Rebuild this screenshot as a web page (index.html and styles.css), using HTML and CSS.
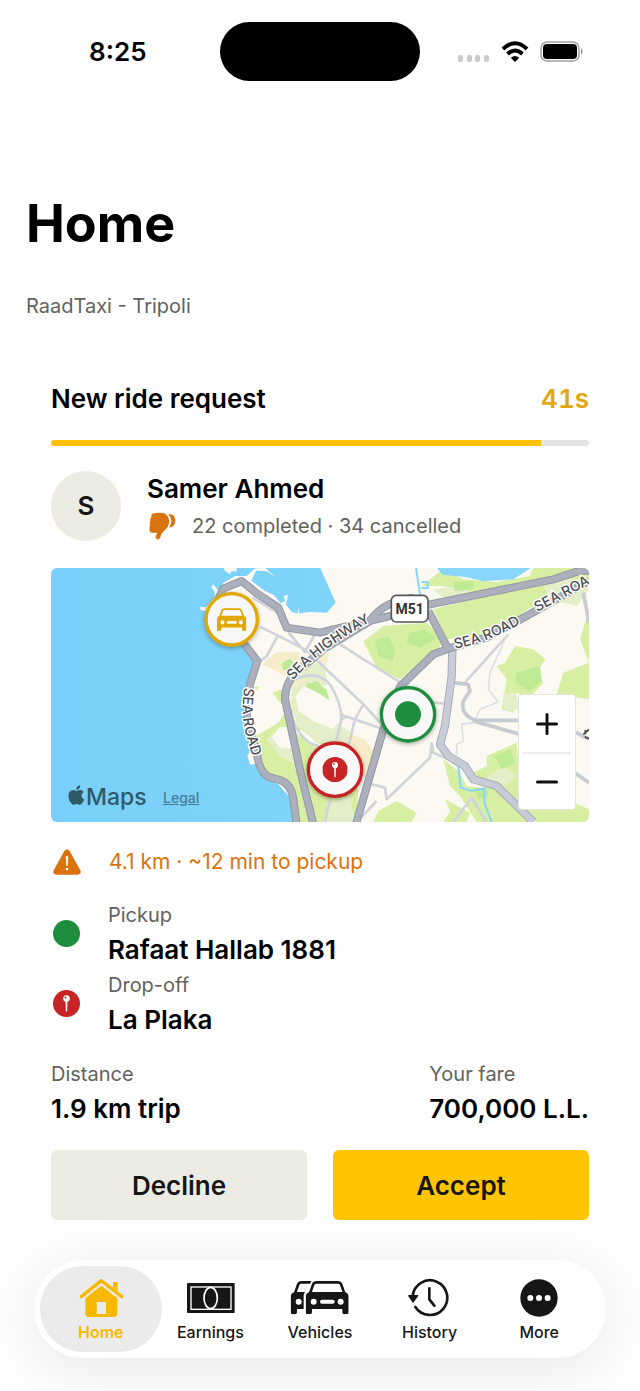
FILE: index.html
```
<!DOCTYPE html>
<html lang="en">
<head>
    <meta charset="UTF-8">
    <meta name="viewport" content="width=device-width, initial-scale=1.0">
    <title>RaadTaxi Driver - Home</title>
    <link rel="stylesheet" href="styles.css">
</head>
<body>
    <!-- shared icons -->
    <svg class="sprite" aria-hidden="true">
        <symbol id="car" viewBox="0 0 129 100">
            <path d="M13 37 L23 9 Q26 4 33 4 H96 Q103 4 106 9 L116 37" fill="none" stroke="currentColor" stroke-width="8"/>
            <path fill="currentColor" fill-rule="evenodd" d="M0 46 Q1 36 12 33 H117 Q128 36 129 46 V94 Q129 100 123 100 H116 Q110 100 110 94 V84 H19 V94 Q19 100 13 100 H6 Q0 100 0 94 Z M15 62 a9 9 0 1 0 18 0 a9 9 0 1 0 -18 0 Z M96 62 a9 9 0 1 0 18 0 a9 9 0 1 0 -18 0 Z M49 56 H81 a6 6 0 0 1 0 12 H49 a6 6 0 0 1 0 -12 Z"/>
        </symbol>
        <symbol id="pin" viewBox="0 0 82 82">
            <circle cx="41" cy="41" r="41" fill="#c62427"/>
            <path d="M38 32 H44 L43 64 L41 67 L39 64 Z" fill="#fff"/>
            <circle cx="41" cy="26" r="10" fill="#fff"/>
            <circle cx="38" cy="23" r="3" fill="#c62427"/>
        </symbol>
    </svg>

    <header class="status-bar">
        <span class="time">8:25</span>
        <span class="island"></span>
        <div class="status-icons">
            <svg width="32" height="21" viewBox="0 0 32 21" fill="#cbcbcb">
                <rect x="0" y="14" width="5" height="7" rx="2"/>
                <rect x="9" y="14" width="5" height="7" rx="2"/>
                <rect x="17" y="14" width="5" height="7" rx="2"/>
                <rect x="26" y="14" width="5" height="7" rx="2"/>
            </svg>
            <svg width="28" height="21" viewBox="0 0 28 21" fill="none" stroke="#000" stroke-width="4">
                <path d="M2 8 Q14 -3.500 26 8"/>
                <path d="M6.500 13 Q14 6 21.500 13"/>
                <path d="M14 21 L9.800 16.700 Q14 13.300 18.200 16.700 Z" fill="#000" stroke="none"/>
            </svg>
            <svg width="44" height="21" viewBox="0 0 44 21">
                <rect x="1" y="1" width="38" height="19" rx="6" fill="none" stroke="#a0a0a0" stroke-width="1.500"/>
                <rect x="3" y="3" width="34" height="15" rx="4"/>
                <path d="M41 7 Q44 10.500 41 14 Z" fill="#8a8a8a"/>
            </svg>
        </div>
    </header>

    <main>
        <h1>Home</h1>
        <p class="subtitle">RaadTaxi - Tripoli</p>

        <section class="request">
            <div class="request-head">
                <h2>New ride request</h2>
                <span class="timer">41s</span>
            </div>
            <div class="progress"><div class="progress-fill" style="width: 91%"></div></div>

            <div class="rider">
                <div class="avatar">S</div>
                <div class="rider-info">
                    <p class="strong">Samer Ahmed</p>
                    <p class="rider-stats">
                        <svg width="27" height="28" viewBox="0 0 81 84" fill="#d9730d">
                            <path d="M10 5 Q30 0 46 4 Q62 12 60 34 Q56 50 42 59 Q35 66 34 76 Q32 84 24 82 Q18 79 21 70 L25 62 H8 Q0 61 2 52 Q0 46 3 40 Q0 34 4 28 Q2 20 7 16 Q6 9 10 5 Z"/>
                            <path d="M58 6 Q78 4 79 27 Q77 46 60 47 Q75 26 58 6 Z"/>
                        </svg>
                        <span>22 completed · 34 cancelled</span>
                    </p>
                </div>
            </div>

            <div class="map">
                <svg class="map-canvas" viewBox="3 6 1614 762" preserveAspectRatio="xMidYMid slice">
                    <defs>
                        <linearGradient id="sea" x1="0" y1="0" x2="1" y2="0">
                            <stop offset="0" stop-color="#78cff9"/>
                            <stop offset="1" stop-color="#86d8fa"/>
                        </linearGradient>
                        <filter id="shadow" x="-30%" y="-30%" width="160%" height="160%">
                            <feDropShadow dx="0" dy="4" stdDeviation="6" flood-opacity="0.35"/>
                        </filter>
                        <path id="coast-label" d="M584 364 Q568 440 592 520 L630 650"/>
                        <path id="highway-label" d="M728 344 Q780 286 830 250 Q900 198 1020 136"/>
                        <path id="road-label" d="M1215 248 Q1330 228 1470 138"/>
                        <path id="road-label-2" d="M1462 138 L1720 0"/>
                    </defs>
                    <rect width="1620" height="774" fill="url(#sea)"/>

                    <!-- land -->
                    <path fill="#fbf9f2" d="M556 30 L590 30 L613 8 L645 5 L678 34 L650 16 L618 14 L604 44 L640 72 L672 88 L692 112 L706 104 L700 90 L714 86 L708 116 L726 138 L742 142 L748 120 L746 142 L780 138 L830 140 L857 110 L812 8 V5 H1620 V774 H735 L725 700 L684 654 L640 630 L618 594 L600 596 L592 570 L600 556 L588 450 L600 380 L612 290 L580 240 L480 180 L470 136 L452 132 L450 122 L468 124 L494 92 L494 78 L484 64 L490 55 L506 76 L520 50 Z"/>
                    <path fill="#fbf9f2" d="M520 6 H560 V16 H545 L540 24 L526 16 Z"/>

                    <!-- parks and fields -->
                    <g fill="#d7efa3">
                        <path d="M618 510 L685 470 L705 440 L735 480 L790 768 H742 L728 690 L690 642 L640 625 Z"/>
                        <path d="M668 380 L700 368 L715 430 L690 410 Z M612 362 L628 360 L622 374 Z"/>
                        <path d="M722 400 L760 430 L790 460 L770 500 L745 490 Z"/>
                        <path d="M735 500 L800 545 L870 520 L910 590 L925 680 L918 768 H790 Z"/>
                        <path d="M1115 60 L1140 40 L1180 8 L1240 40 L1340 48 L1440 30 L1450 6 H1617 V60 L1440 125 L1340 205 L1190 220 L1150 130 L1310 90 L1180 60 Z"/>
                        <path d="M940 226 L1000 180 L1130 170 L1180 220 L1160 262 L1050 340 L980 305 Z"/>
                        <path d="M1340 300 L1365 290 L1395 240 L1450 250 L1486 280 L1460 320 L1480 350 L1440 395 L1400 380 L1390 440 L1355 430 L1370 340 Z"/>
                        <path d="M1617 130 L1590 220 L1617 290 Z M1617 290 L1540 320 L1520 385 L1617 400 Z"/>
                        <path d="M1180 580 L1230 620 L1250 660 L1340 670 L1450 768 H1280 L1230 690 L1200 660 Z"/>
                        <path d="M1310 570 L1400 530 L1410 640 L1617 730 V768 H1460 L1360 660 L1250 630 L1310 600 Z"/>
                        <path d="M985 735 L1040 705 L1100 740 L1085 768 H970 Z M1185 700 L1260 740 L1250 768 H1180 L1200 735 Z"/>
                    </g>
                    <g fill="#e4eec8">
                        <path d="M650 520 L690 480 L728 530 L745 600 L690 570 Z"/>
                        <path d="M725 350 L790 285 L822 300 L835 355 L790 370 L725 400 Z"/>
                        <path d="M722 385 L745 400 L770 440 L860 470 L905 500 L890 560 L800 530 L745 480 Z"/>
                        <path d="M1150 70 L1240 60 L1280 95 L1190 105 Z M1480 60 L1560 35 L1617 70 L1580 120 L1500 100 Z"/>
                        <path d="M1360 380 L1400 380 L1405 430 L1360 435 Z M1300 640 L1360 600 L1400 630 L1360 660 Z"/>
                        <path d="M832 715 L900 690 L915 768 H825 Z"/>
                    </g>
                    <g fill="#f6ecca">
                        <path d="M635 295 L680 258 L745 258 L765 285 L728 345 L680 315 Z"/>
                        <path d="M728 345 L770 340 L765 352 L735 365 Z M700 395 L722 400 L735 440 L712 440 Z"/>
                        <path d="M890 500 L945 520 L972 560 L955 650 L920 600 Z M800 270 L840 262 L825 302 L805 300 Z"/>
                    </g>
                    <g fill="#bdea93">
                        <path d="M696 290 L722 278 L738 300 L728 322 L698 310 Z M768 355 L800 346 L830 372 L838 404 L812 392 L770 368 Z"/>
                        <path d="M975 222 L1015 210 L1035 250 L1028 285 L985 270 Z M1080 200 L1125 190 L1160 215 L1110 245 L1070 230 Z"/>
                        <path d="M1210 48 L1270 45 L1268 70 L1215 75 Z M1400 320 L1470 300 L1475 345 L1440 375 L1395 350 Z"/>
                        <path d="M1335 570 L1380 550 L1395 590 L1355 610 Z M1275 668 L1312 664 L1314 690 L1285 698 Z"/>
                    </g>
                    <path fill="#fbf9f2" d="M665 515 L690 484 L725 482 L742 550 L690 545 Z M738 390 L760 360 L800 378 L850 410 L868 460 L850 490 L790 465 L745 435 Z"/>

                    <!-- inner water -->
                    <path fill="#88d7fa" d="M1160 5 L1178 26 L1250 34 L1300 46 L1390 40 L1440 8 V5 Z"/>
                    <path d="M1098 5 L1111 92 M1114 48 H1133 V66 H1114" fill="none" stroke="#88d7fa" stroke-width="6"/>
                    <path d="M1195 575 L1225 600 L1232 665 L1262 674 L1303 668 V710 L1325 768" fill="none" stroke="#88d7fa" stroke-width="6"/>

                    <!-- small streets -->
                    <g fill="none" stroke="#d1d5db" stroke-width="8" stroke-linejoin="round">
                        <path d="M608 95 L690 145 L720 205 L765 258 L795 205 M630 182 L765 250 L940 415 L1000 480"/>
                        <path d="M682 212 L650 270 L632 285 M940 415 L915 460 L895 540"/>
                        <path d="M735 340 Q800 310 840 355 Q880 420 872 470 L860 520 M842 695 L825 768"/>
                        <path d="M870 235 L1060 355 M872 440 L885 455 L872 462 M885 450 L1000 490 M1375 205 L1240 355"/>
                        <path d="M722 430 Q740 525 805 540 M1150 410 L1180 412 M1145 530 L1150 560 L1185 575"/>
                        <path d="M1145 530 L1140 575 L1010 700 L1005 665 L965 655 M980 705 L920 768 M1210 768 L1265 695 L1310 768"/>
                    </g>
                    <path d="M1370 210 L1320 320 L1315 370 L1345 408 L1290 430 L1270 470 L1235 475 L1240 525 L1220 535 V568" fill="none" stroke="#dde0e3" stroke-width="5"/>
                    <g fill="none" stroke="#c6ccd1" stroke-width="11" stroke-linejoin="round">
                        <path d="M1210 350 L1255 356 L1260 375 L1240 405 Q1230 445 1275 463 H1420"/>
                        <path d="M1270 465 L1420 508 L1560 490 L1617 520 M1560 610 L1617 650 M1600 80 L1617 170"/>
                    </g>

                    <!-- main roads, casing first -->
                    <g fill="none" stroke-linejoin="round">
                        <path d="M1207 250 L1205 330 L1185 480 L1170 535 L1195 570 L1245 600 L1270 640 L1340 660 L1450 768" stroke="#a8adb9" stroke-width="25"/>
                        <path d="M1207 250 L1205 330 L1185 480 L1170 535 L1195 570 L1245 600 L1270 640 L1340 660 L1450 768" stroke="#c8ccd6" stroke-width="19"/>
                        <g stroke="#9398a5" stroke-width="24">
                            <path d="M500 108 L520 68 L575 45 L620 82 L685 125 L710 185 L810 200 L1020 150 L1140 115 L1510 40 L1590 14 H1617"/>
                            <path d="M580 230 L622 285 L600 355 L590 450 L620 560 Q630 625 660 634 L690 642 Q725 655 730 700 L740 774"/>
                            <path d="M790 774 L752 620 L705 400 Q705 350 740 318 L820 250 L960 165 Q1000 105 1090 95"/>
                            <path d="M918 774 L1000 490 L1050 362 L1150 265 L1195 248 L1310 215 L1430 150 L1617 45"/>
                            <path d="M1135 135 L1195 250"/>
                        </g>
                        <g stroke="#abb0bc" stroke-width="18">
                            <path d="M500 108 L520 68 L575 45 L620 82 L685 125 L710 185 L810 200 L1020 150 L1140 115 L1510 40 L1590 14 H1617"/>
                            <path d="M580 230 L622 285 L600 355 L590 450 L620 560 Q630 625 660 634 L690 642 Q725 655 730 700 L740 774"/>
                            <path d="M790 774 L752 620 L705 400 Q705 350 740 318 L820 250 L960 165 Q1000 105 1090 95"/>
                            <path d="M918 774 L1000 490 L1050 362 L1150 265 L1195 248 L1310 215 L1430 150 L1617 45"/>
                            <path d="M1135 135 L1195 250"/>
                        </g>
                    </g>

                    <g class="road-text">
                        <text><textPath href="#coast-label">SEA ROAD</textPath></text>
                        <text><textPath href="#highway-label">SEA HIGHWAY</textPath></text>
                        <text><textPath href="#road-label">SEA ROAD</textPath></text>
                        <text><textPath href="#road-label-2">SEA ROA</textPath></text>
                    </g>
                    <rect x="1024" y="88" width="110" height="80" rx="15" fill="#fff" stroke="#55575b" stroke-width="5"/>
                    <text class="shield-text" x="1079" y="144">M51</text>
                    <path d="M1600 505 L1617 490 M1604 512 L1617 518 M1606 492 V505" stroke="#444" stroke-width="5"/>

                    <!-- markers -->
                    <g stroke-width="10" fill="#f8f8f8">
                        <circle cx="545" cy="160" r="77" stroke="#e0a800" filter="url(#shadow)"/>
                        <circle cx="1074" cy="445" r="80" stroke="#1e8e3e" filter="url(#shadow)"/>
                        <circle cx="855" cy="611" r="80" stroke="#c62427" filter="url(#shadow)"/>
                    </g>
                    <use class="car-marker" href="#car" x="501" y="126" width="88" height="70"/>
                    <circle cx="1074" cy="445" r="39" fill="#1e8e3e"/>
                    <use href="#pin" x="817" y="573" width="76" height="76"/>

                    <!-- map provider -->
                    <g fill="#305967">
                        <path transform="translate(50 658) scale(2.420)" d="M12.152 6.896c-.948 0-2.415-1.078-3.960-1.040-2.040.027-3.910 1.183-4.961 3.014-2.117 3.675-.546 9.103 1.519 12.090 1.013 1.454 2.208 3.090 3.792 3.039 1.520-.065 2.090-.987 3.935-.987 1.831 0 2.350.987 3.960.948 1.637-.026 2.676-1.480 3.676-2.948 1.156-1.688 1.636-3.325 1.662-3.415-.039-.013-3.182-1.221-3.220-4.857-.026-3.040 2.480-4.494 2.597-4.559-1.429-2.090-3.623-2.324-4.390-2.376-2-.156-3.675 1.090-4.610 1.090zM15.530 3.830c.843-1.012 1.400-2.427 1.245-3.830-1.207.052-2.662.805-3.532 1.818-.780.896-1.454 2.338-1.273 3.714 1.338.104 2.715-.688 3.559-1.701"/>
                        <text class="maps-text" x="108" y="716">Maps</text>
                    </g>
                </svg>
                <a class="legal" href="#">Legal</a>
                <div class="zoom">
                    <button type="button" aria-label="Zoom in">
                        <svg width="22" height="22" viewBox="0 0 22 22"><path d="M1.500 11 H20.500 M11 1.500 V20.500"/></svg>
                    </button>
                    <button type="button" aria-label="Zoom out">
                        <svg width="22" height="22" viewBox="0 0 22 22"><path d="M1.500 11 H20.500"/></svg>
                    </button>
                </div>
            </div>

            <div class="eta">
                <svg width="28" height="26" viewBox="0 0 84 78">
                    <path d="M34 6 Q42 -4 50 6 L82 64 Q86 76 74 77 H10 Q-2 76 2 64 Z" fill="#d9730d"/>
                    <path d="M38 22 H46 L44 50 H40 Z" fill="#fff"/>
                    <circle cx="42" cy="60" r="4" fill="#fff"/>
                </svg>
                <span>4.1 km · ~12 min to pickup</span>
            </div>

            <div class="stop">
                <span class="dot"></span>
                <div>
                    <p class="label">Pickup</p>
                    <p class="strong">Rafaat Hallab 1881</p>
                </div>
            </div>
            <div class="stop">
                <svg width="27" height="27"><use href="#pin"/></svg>
                <div>
                    <p class="label">Drop-off</p>
                    <p class="strong">La Plaka</p>
                </div>
            </div>

            <div class="trip">
                <div>
                    <p class="label">Distance</p>
                    <p class="strong">1.9 km trip</p>
                </div>
                <div>
                    <p class="label">Your fare</p>
                    <p class="strong">700,000 L.L.</p>
                </div>
            </div>

            <div class="actions">
                <button type="button" class="btn">Decline</button>
                <button type="button" class="btn btn-accept">Accept</button>
            </div>
        </section>
    </main>

    <nav class="tab-bar">
        <a class="tab active" href="#">
            <svg width="60" height="40" viewBox="0 0 180 120">
                <path d="M31 56 L91 8 L152 56" fill="none" stroke="currentColor" stroke-width="10" stroke-linecap="round" stroke-linejoin="round"/>
                <path d="M126 14 Q126 12 129 12 H137 Q140 12 140 14 V40 L126 29 Z" fill="currentColor"/>
                <path fill-rule="evenodd" d="M91 23 L139 61 V106 Q139 117 128 117 H54 Q43 117 43 106 V61 Z M77 72 V108 H105 V72 Z" fill="currentColor"/>
            </svg>
            <span>Home</span>
        </a>
        <a class="tab" href="#">
            <svg width="60" height="40" viewBox="0 0 180 120">
                <rect x="21" y="15" width="143" height="90" rx="3" fill="currentColor"/>
                <rect x="33" y="27" width="120" height="67" fill="none" stroke="#fff" stroke-width="4"/>
                <ellipse cx="92" cy="60" rx="20" ry="32" fill="currentColor" stroke="#fff" stroke-width="5"/>
            </svg>
            <span>Earnings</span>
        </a>
        <a class="tab" href="#">
            <svg width="60" height="40" viewBox="0 0 180 120">
                <use href="#car" x="2" y="9" width="129" height="100"/>
                <path d="M41 120 V52 Q42 42 53 36 L64 8 Q68 0 80 0 H180 V120 Z" fill="#fff"/>
                <use href="#car" x="47" y="9" width="129" height="100"/>
            </svg>
            <span>Vehicles</span>
        </a>
        <a class="tab" href="#">
            <svg width="60" height="40" viewBox="0 0 180 120">
                <path d="M38 54 A52 52 0 1 1 46 87 M88 31 V64 L103 83" fill="none" stroke="currentColor" stroke-width="8" stroke-linecap="round" stroke-linejoin="round"/>
                <path d="M24 53 Q24 51 27 51 H53 Q56 51 55 54 L41 73 Q39 75 37 73 Z" fill="currentColor"/>
            </svg>
            <span>History</span>
        </a>
        <a class="tab" href="#">
            <svg width="60" height="40" viewBox="0 0 180 120">
                <circle cx="90" cy="60" r="56" fill="currentColor"/>
                <g fill="#fff"><circle cx="64" cy="60" r="9"/><circle cx="90" cy="60" r="9"/><circle cx="116" cy="60" r="9"/></g>
            </svg>
            <span>More</span>
        </a>
    </nav>
</body>
</html>
```
FILE: styles.css
```
* {
    box-sizing: border-box;
}
body {
    margin: 0;
    font-family: Inter, sans-serif;
    background-color: #fefefe;
    color: #000;
    overflow-x: hidden;
}
h1, h2, p {
    margin: 0;
}
svg {
    display: block;
    flex-shrink: 0;
}
button {
    font-family: inherit;
    border: none;
    padding: 0;
    cursor: pointer;
}
a {
    color: inherit;
}
.sprite {
    width: 0;
    height: 0;
    position: absolute;
}

/* status bar */
.status-bar {
    display: grid;
    grid-template-columns: 1fr 200px 1fr;
    align-items: center;
    padding-top: 22px;
}
.time {
    padding-left: 89px;
    font-size: 26px;
    font-weight: 600;
}
.island {
    height: 59px;
    border-radius: 30px;
    background-color: #000;
}
.status-icons {
    display: flex;
    justify-content: flex-end;
    gap: 11px;
    padding-right: 56px;
}

main {
    padding: 0 26px;
}
h1 {
    margin-top: 111px;
    font-size: 52px;
    line-height: 64px;
    font-weight: 700;
}
.subtitle {
    margin-top: 36px;
    font-size: 20px;
    line-height: 28px;
    color: #62625d;
}

/* ride request */
.request {
    padding: 0 25px;
    margin-top: 63px;
}
.request-head {
    display: flex;
    justify-content: space-between;
    line-height: 32px;
}
h2, .strong, .timer {
    font-size: 26px;
    font-weight: 600;
}
.timer {
    color: #e0a810;
    font-variant-numeric: tabular-nums;
}
.progress {
    height: 6px;
    margin-top: 25px;
    border-radius: 3px;
    background-color: #e3e3e3;
    overflow: hidden;
}
.progress-fill {
    height: 100%;
    background-color: #ffc107;
}
.rider {
    display: flex;
    gap: 26px;
    margin-top: 25px;
}
.avatar {
    width: 70px;
    height: 70px;
    border-radius: 50%;
    background-color: #ecece4;
    color: #161616;
    font-size: 26px;
    font-weight: 600;
    line-height: 70px;
    text-align: center;
}
.strong {
    line-height: 36px;
}
.rider-stats {
    display: flex;
    align-items: center;
    gap: 16px;
    padding-left: 2px;
    margin-top: 2px;
    font-size: 20px;
    line-height: 34px;
    color: #62625d;
}

/* map */
.map {
    position: relative;
    margin-top: 25px;
    border-radius: 6px;
    overflow: hidden;
}
.map-canvas {
    width: 100%;
    height: auto;
}
.road-text text {
    font-size: 42px;
    font-weight: 500;
    fill: #4c4e52;
    stroke: #fff;
    stroke-width: 8px;
    paint-order: stroke;
}
.shield-text {
    font-family: Roboto, sans-serif;
    font-size: 42px;
    font-weight: 700;
    text-anchor: middle;
    fill: #333;
}
.car-marker {
    color: #e0a800;
}
.maps-text {
    font-size: 69px;
    font-weight: 500;
}
.legal {
    position: absolute;
    left: 112px;
    bottom: 14px;
    font-size: 14px;
    line-height: 20px;
    font-weight: 500;
    color: #467f95;
}
.zoom {
    position: absolute;
    right: 13px;
    bottom: 12px;
    width: 58px;
    padding: 0 4px;
    border: 1px solid #e4e4e0;
    border-radius: 4px;
    background-color: #fff;
}
.zoom button {
    display: flex;
    align-items: center;
    justify-content: center;
    width: 100%;
    height: 57px;
    background: none;
}
.zoom button + button {
    border-top: 2px solid #ececec;
}
.zoom path {
    stroke: #111;
    stroke-width: 3px;
    stroke-linecap: round;
}

/* trip details */
.eta {
    display: flex;
    align-items: center;
    gap: 28px;
    margin-top: 22px;
    padding-left: 2px;
    font-size: 21px;
    line-height: 36px;
    color: #d9730d;
}
.stop {
    display: flex;
    align-items: center;
    gap: 28px;
    padding-left: 2px;
}
.eta + .stop {
    margin-top: 18px;
}
.dot {
    width: 27px;
    height: 27px;
    border-radius: 50%;
    background-color: #1e8e3e;
}
.label {
    font-size: 20px;
    line-height: 34px;
    color: #62625d;
}
.trip {
    display: flex;
    justify-content: space-between;
    margin-top: 19px;
}
.actions {
    display: flex;
    gap: 26px;
    margin-top: 23px;
}
.btn {
    flex: 1;
    height: 70px;
    border-radius: 6px;
    background-color: #ecece4;
    color: #161616;
    font-size: 26px;
    font-weight: 600;
}
.btn-accept {
    background-color: #ffc403;
}

/* tab bar */
.tab-bar {
    display: grid;
    grid-template-columns: repeat(5, 1fr);
    margin: 40px 34px 34px;
    padding: 6px 12px;
    border-radius: 49px;
    background-color: #fff;
    box-shadow: 0 10px 60px rgba(0, 0, 0, 0.09);
}
.tab {
    display: flex;
    flex-direction: column;
    align-items: center;
    gap: 4px;
    height: 86px;
    padding-top: 12px;
    border-radius: 43px;
    font-size: 16px;
    line-height: 20px;
    font-weight: 500;
    color: #161616;
    text-decoration: none;
}
.tab.active {
    margin: 0 -6px;
    background-color: #ebebeb;
    color: #f7b900;
    font-weight: 600;
}
```
